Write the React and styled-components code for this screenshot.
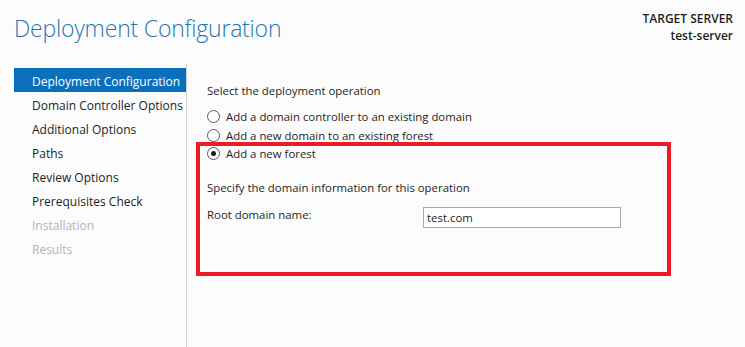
import React from 'react';
import styled, { createGlobalStyle } from 'styled-components';

const GlobalStyle = createGlobalStyle`
  html, body {
    margin: 0;
    padding: 0;
    background: #fcfcfc;
  }
  body {
    font-family: "Open Sans", "Noto Sans", "Liberation Sans", sans-serif;
    font-size: 12px;
    color: #1e1e1e;
  }
`;

const Page = styled.div`
  width: 745px;
  height: 347px;
  display: flex;
  flex-direction: column;
  overflow: hidden;
  background: #fcfcfc;
`;

const Header = styled.header`
  height: 64px;
  display: flex;
  justify-content: space-between;
  align-items: flex-start;
  padding: 0 12px 0 14px;
  box-sizing: border-box;
`;

const Title = styled.h1`
  margin: 12px 0 0;
  font-weight: 300;
  font-size: 23px;
  line-height: 32px;
  color: #1f78b5;
  letter-spacing: -0.2px;
`;

const ServerInfo = styled.div`
  margin-top: 10px;
  text-align: right;
  font-weight: 600;
  font-size: 12px;
  line-height: 17px;
  color: #1e1e1e;
`;

const Main = styled.div`
  flex: 1;
  display: flex;
`;

const Sidebar = styled.nav`
  width: 187px;
  box-sizing: border-box;
  padding: 4px 0 0 14px;
  border-right: 1px solid #d0d0d0;
  display: flex;
  flex-direction: column;
`;

const NavItem = styled.div`
  height: 24px;
  box-sizing: border-box;
  padding: 3px 0 0 18px;
  line-height: 21px;
  white-space: nowrap;
  background: ${props => props.active ? '#0a6fbd' : 'transparent'};
  color: ${props => props.active ? '#ffffff' : props.disabled ? '#b4b4b4' : '#1e1e1e'};
`;

const Content = styled.section`
  flex: 1;
  padding: 19px 0 0 20px;
  display: flex;
  flex-direction: column;
  align-items: flex-start;
  font-size: 11.4px;
`;

const Label = styled.div`
  line-height: 16px;
  white-space: nowrap;
  margin-top: ${props => props.gap || 0}px;
`;

const RadioGroup = styled.div`
  margin-top: 8px;
  display: flex;
  flex-direction: column;
`;

const RadioRow = styled.label`
  height: 19px;
  display: flex;
  align-items: center;
  gap: 6px;
  white-space: nowrap;
  margin-top: ${props => props.offset || 0}px;
`;

const RadioDot = styled.span`
  width: 13px;
  height: 13px;
  box-sizing: border-box;
  border-radius: 50%;
  border: 1px solid #5a5a5a;
  background: #ffffff;
  display: flex;
  align-items: center;
  justify-content: center;
  flex-shrink: 0;
  &:after {
    content: '';
    width: 5px;
    height: 5px;
    border-radius: 50%;
    background: ${props => props.checked ? '#1a1a1a' : 'transparent'};
  }
`;

const Highlight = styled.div`
  width: 475px;
  box-sizing: border-box;
  margin: -3px 0 0 -11px;
  border: 4px solid #ed1c24;
  padding: 0 7px 44px;
  display: flex;
  flex-direction: column;
`;

const FieldRow = styled.div`
  margin-top: 11px;
  display: flex;
  align-items: center;
`;

const FieldLabel = styled.span`
  width: 216px;
  margin-top: -6px;
`;

const TextInput = styled.div`
  width: 198px;
  height: 21px;
  box-sizing: border-box;
  border: 1px solid #a9a9a9;
  background: #ffffff;
  padding: 0 3px;
  line-height: 19px;
`;

const navItems = [
  { label: 'Deployment Configuration', active: true },
  { label: 'Domain Controller Options' },
  { label: 'Additional Options' },
  { label: 'Paths' },
  { label: 'Review Options' },
  { label: 'Prerequisites Check' },
  { label: 'Installation', disabled: true },
  { label: 'Results', disabled: true },
];

const App = () => (
  <Page>
    <GlobalStyle />
    <Header>
      <Title>Deployment Configuration</Title>
      <ServerInfo>
        <div>TARGET SERVER</div>
        <div>test-server</div>
      </ServerInfo>
    </Header>
    <Main>
      <Sidebar>
        {navItems.map(item => (
          <NavItem key={item.label} active={item.active} disabled={item.disabled}>
            {item.label}
          </NavItem>
        ))}
      </Sidebar>
      <Content>
        <Label>Select the deployment operation</Label>
        <RadioGroup>
          <RadioRow><RadioDot />Add a domain controller to an existing domain</RadioRow>
          <RadioRow><RadioDot />Add a new domain to an existing forest</RadioRow>
        </RadioGroup>
        <Highlight>
          <RadioRow offset={-2}><RadioDot checked />Add a new forest</RadioRow>
          <Label gap={17}>Specify the domain information for this operation</Label>
          <FieldRow>
            <FieldLabel>Root domain name:</FieldLabel>
            <TextInput>test.com</TextInput>
          </FieldRow>
        </Highlight>
      </Content>
    </Main>
  </Page>
);

export default App;
